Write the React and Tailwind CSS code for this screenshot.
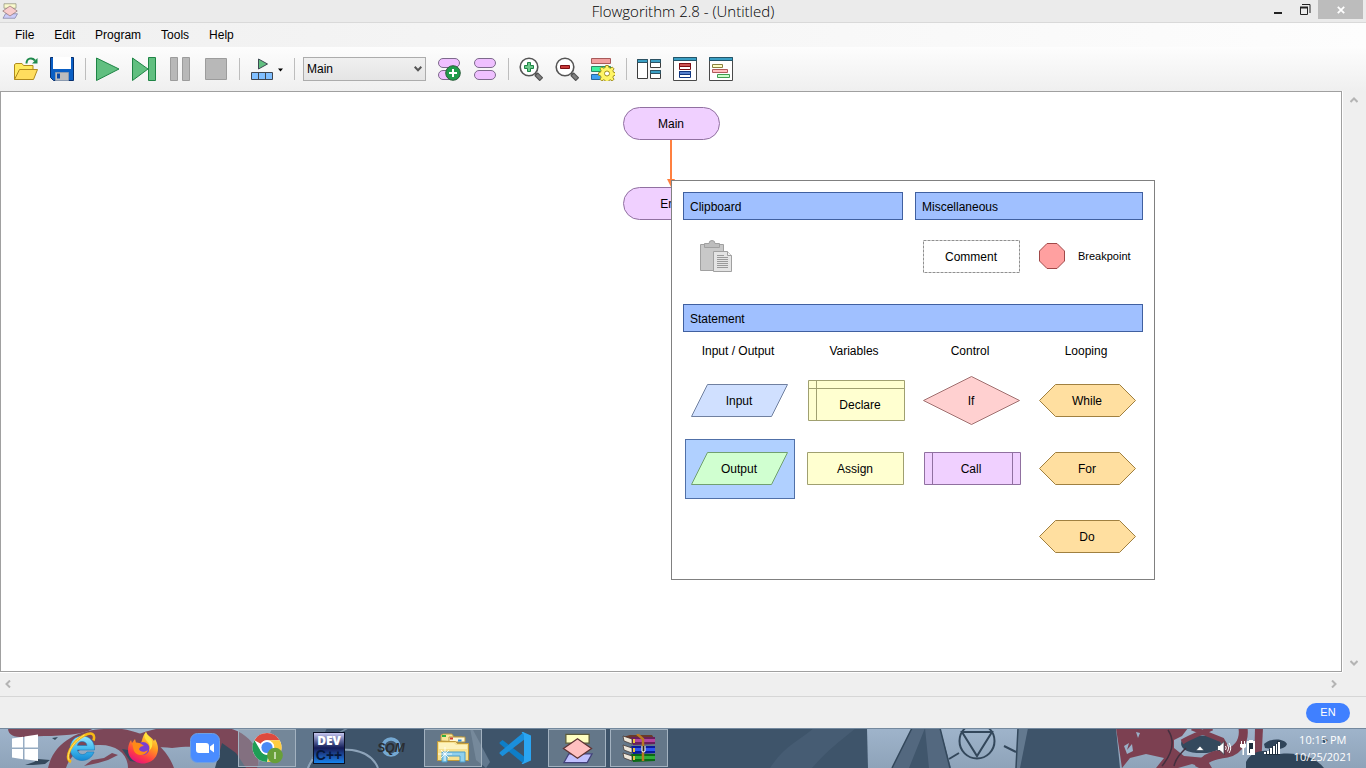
import React from "react";

/* ---------- toolbar drawings ---------- */

function Icon({ children, w = 24 }) {
  return (
    <svg width={w} height="24" viewBox={`0 0 ${w} 24`} fill="none" aria-hidden="true">
      {children}
    </svg>
  );
}

const OpenIcon = () => (
  <Icon>
    <path d="M.5 22.5V7.5L2 6.5h6l1.500 2H19v5" fill="#ffea61" stroke="#b08a1c" />
    <path d="M5.500 12.500h18l-4 10H.5z" fill="#ffdd5e" stroke="#b08a1c" />
    <path d="M12.500 6.500C12.500 1 18 0 21 3.500" stroke="#1f8a4c" strokeWidth="2" />
    <path d="M23.500 1v5.500H18z" fill="#1f8a4c" />
  </Icon>
);

const SaveIcon = () => (
  <Icon>
    <path d="M.5.5h23v23H3.500l-3-3z" fill="#0a5fc4" stroke="#062f6e" />
    <path d="M3 0h18v12H3z" fill="#fff" />
    <path d="M5.500 15.500h13v8h-13z" fill="#bdbdbd" stroke="#8b9bb0" />
    <path d="M7 16.500h3v5H7z" fill="#0a4aa8" />
  </Icon>
);

const PlayIcon = () => (
  <Icon>
    <path d="M.5 1v22.500L23 12z" fill="#61bf80" stroke="#1e8445" />
  </Icon>
);

const StepIcon = () => (
  <Icon>
    <path d="M.5 1v22.500L16 12z" fill="#61bf80" stroke="#1e8445" />
    <path d="M16.500.5h7v23h-7z" fill="#61bf80" stroke="#1e8445" />
  </Icon>
);

const PauseIcon = () => (
  <Icon>
    <path d="M2.500.5h7v23h-7zM14.500.5h7v23h-7z" fill="#b8b8b8" stroke="#9c9c9c" />
  </Icon>
);

const StopIcon = () => (
  <Icon>
    <path d="M1.500 1.500h21v21h-21z" fill="#b8b8b8" stroke="#9c9c9c" />
  </Icon>
);

const LayoutIcon = () => (
  <Icon w={33}>
    <path d="M8.500 2v10l9-5z" fill="#61bf80" stroke="#3d4a52" />
    <path d="M1.500 15.500h21v7h-21zM8.500 15.500v7M15.500 15.500v7" fill="#80bfff" stroke="#3f4650" />
    <path d="M28 11.500h5l-2.500 3z" fill="#000" />
  </Icon>
);

const Pills = () => (
  <>
    <rect x="1.500" y="1.500" width="21" height="9" rx="4.500" fill="#efc0ff" stroke="#7d6a8c" />
    <rect x="1.500" y="13.500" width="21" height="9" rx="4.500" fill="#efc0ff" stroke="#7d6a8c" />
  </>
);

const AddFunctionIcon = () => (
  <Icon>
    <Pills />
    <circle cx="16" cy="16" r="7.300" fill="#1f9c4b" stroke="#2d5f3d" />
    <path d="M16 12v8M12 16h8" stroke="#fff" strokeWidth="2" />
  </Icon>
);

const FunctionsIcon = () => (
  <Icon>
    <Pills />
  </Icon>
);

const Lens = ({ children }) => (
  <Icon>
    <path d="M16 16l2 2" stroke="#5a5a5a" strokeWidth="2" />
    <path d="M17 17l5.500 5.500" stroke="#4d4d4d" strokeWidth="5" />
    <path d="M17.800 17.800l4 4" stroke="#808080" strokeWidth="3" />
    <circle cx="10" cy="10" r="8.800" fill="#fff" stroke="#555" strokeWidth="1.600" />
    {children}
  </Icon>
);

const ZoomInIcon = () => (
  <Lens>
    <path d="M8.500 5.500h3v3h3v3h-3v3h-3v-3h-3v-3h3z" fill="#6cc98a" stroke="#1e8445" />
  </Lens>
);

const ZoomOutIcon = () => (
  <Lens>
    <path d="M5.500 8.500h9v3h-9z" fill="#c93a3a" stroke="#7d0f14" />
  </Lens>
);

const SchemeIcon = () => (
  <Icon>
    <path d="M.5 1.500h19v5H.5z" fill="#f2a0a0" stroke="#a85a5a" />
    <path d="M.5 9.500h19v5H.5z" fill="#40f0a0" stroke="#2b8a62" />
    <path d="M.5 17.500h19v5H.5z" fill="#40a0f0" stroke="#2a669c" />
    <path
      d="M14.700 8.500h2.600l.5 2 1.600.7 1.900-1.100 1.700 1.700-1.100 1.900.7 1.600 2 .5v2.400l-2 .5-.7 1.600 1.100 1.900-1.700 1.700-1.900-1.100-1.600.7-.5 1.500h-2.600l-.5-1.500-1.600-.7-1.900 1.100L9 22.200l1.100-1.900-.7-1.600-1.900-.5v-2.400l1.900-.5.7-1.600L9 11.800l1.700-1.700 1.900 1.100 1.600-.7z"
      fill="#fff566"
      stroke="#a08e1e"
    />
    <circle cx="16" cy="16.500" r="2.500" fill="#fff" stroke="#a08e1e" />
  </Icon>
);

const WindowsIcon = () => (
  <Icon>
    <g stroke="#3c3c3c">
      <path d="M.5 2.500h10v19H.5zM13.500 2.500h10v8h-10zM13.500 13.500h10v8h-10z" fill="#fff" />
      <path d="M.5 2.500h10v3H.5zM13.500 2.500h10v3h-10zM13.500 13.500h10v3h-10z" fill="#3a9fc4" stroke="#2d5263" />
    </g>
  </Icon>
);

const VariablesIcon = () => (
  <Icon>
    <path d="M.5.5h23v23H.5z" fill="#fff" stroke="#4a4a4a" />
    <path d="M.5.5h23v3H.5z" fill="#3a9fc4" stroke="#24566a" />
    <path d="M6.500 6.500h11v6h-11z" fill="#fff" stroke="#7d0f14" />
    <path d="M6.500 6.500h11v3h-11z" fill="#cc5555" stroke="#7d0f14" />
    <path d="M6.500 14.500h11v6h-11z" fill="#fff" stroke="#0f3580" />
    <path d="M6.500 14.500h11v3h-11z" fill="#5580cc" stroke="#0f3580" />
  </Icon>
);

const ConsoleIcon = () => (
  <Icon>
    <path d="M.5.5h23v23H.5z" fill="#fff" stroke="#4a4a4a" />
    <path d="M.5.5h23v3H.5z" fill="#3a9fc4" stroke="#24566a" />
    <path d="M3.500 7.500h10v3h-10z" fill="#ffffc4" stroke="#8a8040" />
    <path d="M3.500 12.500h15v3h-15z" fill="#ffc0c0" stroke="#b05a5a" />
    <path d="M8.500 17.500h12v3h-12z" fill="#ccffcc" stroke="#3f9c4f" />
  </Icon>
);

function Tool({ label, children }) {
  return (
    <button type="button" aria-label={label} className="shrink-0">
      {children}
    </button>
  );
}

const Separator = () => <span className="ml-[11px] mr-2.5 h-[22px] w-px shrink-0 bg-[#bdbdbd]" />;

function Toolbar() {
  return (
    <div className="flex h-11 items-center bg-linear-to-b from-[#fdfdfd] to-[#efefef] pl-3.5">
      <div className="flex gap-3">
        <Tool label="Open"><OpenIcon /></Tool>
        <Tool label="Save"><SaveIcon /></Tool>
      </div>
      <Separator />
      <div className="flex gap-3">
        <Tool label="Run"><PlayIcon /></Tool>
        <Tool label="Step"><StepIcon /></Tool>
        <Tool label="Pause"><PauseIcon /></Tool>
        <Tool label="Stop"><StopIcon /></Tool>
      </div>
      <Separator />
      <Tool label="Layout windows"><LayoutIcon /></Tool>
      <span className="ml-[11px] mr-2 h-[22px] w-px shrink-0 bg-[#bdbdbd]" />
      <div className="grid shrink-0 items-center">
        <select
          aria-label="Function"
          className="col-start-1 row-start-1 h-6 w-[123px] appearance-none border border-[#acacac] bg-linear-to-b from-[#f0f0f0] to-[#e5e5e5] pl-[3px] text-[12px]"
        >
          <option>Main</option>
        </select>
        <svg className="pointer-events-none col-start-1 row-start-1 mr-1 justify-self-end" width="8" height="6" viewBox="0 0 8 6" fill="none">
          <path d="M.7.8L4 4.200 7.300.8" stroke="#555" strokeWidth="2" />
        </svg>
      </div>
      <div className="ml-[11px] flex gap-3">
        <Tool label="Add function"><AddFunctionIcon /></Tool>
        <Tool label="Function manager"><FunctionsIcon /></Tool>
      </div>
      <Separator />
      <div className="flex gap-3">
        <Tool label="Zoom in"><ZoomInIcon /></Tool>
        <Tool label="Zoom out"><ZoomOutIcon /></Tool>
        <Tool label="Chart style"><SchemeIcon /></Tool>
      </div>
      <Separator />
      <div className="flex gap-3">
        <Tool label="Source code viewer"><WindowsIcon /></Tool>
        <Tool label="Variable watch"><VariablesIcon /></Tool>
        <Tool label="Console"><ConsoleIcon /></Tool>
      </div>
    </div>
  );
}

/* ---------- window frame ---------- */

function FlowLogo({ size, faded }) {
  return (
    <svg width={size} height={size} viewBox="0 0 32 32" className={faded ? "opacity-70" : ""} aria-hidden="true">
      <path d="M4 1.500h24v9H4z" fill="#ffffc0" stroke="#5c5c3c" strokeWidth="1.300" />
      <path d="M7 21.500h24l-5 9H2z" fill="#c0c0ff" stroke="#42427a" strokeWidth="1.300" />
      <path d="M1.500 16L16 6l14.500 10L16 26z" fill="#ffc0c0" stroke="#5e3434" strokeWidth="1.300" />
    </svg>
  );
}

function TitleBar() {
  return (
    <header className="grid h-[23px] grid-cols-[1fr_auto_1fr] items-start border-b border-[#d9d9d9] bg-[#ebebeb]">
      <span className="pt-[3px] pl-0.5">
        <FlowLogo size={16} faded />
      </span>
      <h1 className="font-['Open_Sans',sans-serif] text-[15px] leading-[23px] font-light text-black">
        Flowgorithm 2.8 - (Untitled)
      </h1>
      <div className="flex justify-end pr-[3px]">
        <button type="button" aria-label="Minimize" className="flex h-[19px] w-[26px] items-center justify-center">
          <svg width="10" height="12" viewBox="0 0 10 12"><path d="M1 8h8v2H1z" fill="#222" /></svg>
        </button>
        <button type="button" aria-label="Restore" className="flex h-[19px] w-[27px] items-center justify-center">
          <svg width="12" height="12" viewBox="0 0 12 12" fill="none" stroke="#222">
            <path d="M3 .5h8V9" />
            <path d="M1.500 3v7.500h7V3" />
            <path d="M1 3.500h8" strokeWidth="2" />
          </svg>
        </button>
        <button type="button" aria-label="Close" className="flex h-[19px] w-[45px] items-center justify-center bg-[#bcbcbc]">
          <svg width="8" height="8" viewBox="0 0 8 8"><path d="M.8.8l6.400 6.400M7.200.8L.8 7.200" stroke="#fff" strokeWidth="1.800" /></svg>
        </button>
      </div>
    </header>
  );
}

function MenuBar() {
  return (
    <nav className="flex h-6 items-center gap-5 bg-linear-to-r from-[#f0f0f0] to-[#fdfdfd] pl-[15px] text-[12px]">
      {["File", "Edit", "Program", "Tools", "Help"].map((m) => (
        <button type="button" key={m}>{m}</button>
      ))}
    </nav>
  );
}

/* ---------- flowchart ---------- */

function Terminal({ text }) {
  return (
    <div className="grid place-items-center">
      <svg className="col-start-1 row-start-1" width="98" height="33" viewBox="0 0 98 33">
        <rect x="1.500" y=".5" width="96" height="32" rx="16" fill="#f0d0ff" stroke="#9070a0" />
      </svg>
      <span className="col-start-1 row-start-1">{text}</span>
    </div>
  );
}

const shapes = {
  io: "M16.500.5h80l-16 32H.5z",
  box: "M.5.5h96v32H.5z",
  declare: "M1.500.5h96v40h-96zM1.500 8.500h96M9.500.5v40",
  diamond: "M.5 24.500l48-24 48 24-48 24z",
  call: "M1.500.5h96v32h-96zM9.500.5v32M89.500.5v32",
  hex: "M.5 16.500l16-16h64l16 16-16 16h-64z",
};

function Statement({ text, shape, fill, stroke, h = 34, selected, inset }) {
  return (
    <button
      type="button"
      className={`grid h-[60px] w-[110px] place-items-center ${selected ? "border border-[#5070a8] bg-[#b0d0ff]" : ""}`}
    >
      <svg className="col-start-1 row-start-1" width="98" height={h} viewBox={`0 0 98 ${h}`}>
        <path d={shapes[shape]} fill={fill} stroke={stroke} />
      </svg>
      <span className={`col-start-1 row-start-1 ${inset ? "pt-2 pl-2" : "pr-0.5"}`}>{text}</span>
    </button>
  );
}

function SectionTitle({ children }) {
  return (
    <h2 className="flex h-7 items-center border border-[#4060a0] bg-[#a0c0ff] px-1.5 pt-0.5">{children}</h2>
  );
}

function Column({ title, children }) {
  return (
    <div className="flex w-[110px] flex-col gap-2">
      <h3 className="-mb-2 h-[39px] pr-1 text-center leading-[38px]">{title}</h3>
      {children}
    </div>
  );
}

function Palette() {
  const yellow = { fill: "#ffffd0", stroke: "#a0a070" };
  const orange = { fill: "#ffdfa0", stroke: "#a08040" };
  return (
    <section className="absolute top-22 left-1/2 w-[484px] border border-[#808080] bg-white p-[11px] pb-3">
      <div className="grid grid-cols-[220px_228px] gap-x-3">
        <SectionTitle>Clipboard</SectionTitle>
        <SectionTitle>Miscellaneous</SectionTitle>
        <div className="flex h-[84px] items-start pt-5 pl-4">
          <button type="button" aria-label="Paste">
            <svg width="34" height="33" viewBox="0 0 34 33">
              <path d="M1.500 4.500h23v26h-23z" fill="#c8c8c8" stroke="#a0a0a0" />
              <path d="M5.500 3.500h4.500a3 3 0 0 1 6 0h4.500v4h-15z" fill="#bdbdbd" stroke="#a0a0a0" />
              <path d="M14.500 11.500h14l4 4v16h-18z" fill="#e4e4e4" stroke="#a0a0a0" />
              <path d="M28.500 11.500v4h4" fill="#f4f4f4" stroke="#a0a0a0" />
              <path d="M18 15.500h7M18 17.500h11M18 19.500h11M18 21.500h11M18 23.500h11M18 25.500h11M18 27.500h11" stroke="#9a9a9a" />
            </svg>
          </button>
        </div>
        <div className="flex h-[84px] items-start pt-5 pl-2">
          <button type="button" className="grid place-items-center">
            <svg className="col-start-1 row-start-1" width="98" height="33" viewBox="0 0 98 33">
              <rect x=".5" y=".5" width="96" height="32" fill="#fff" stroke="#909090" strokeDasharray="3 1" />
            </svg>
            <span className="col-start-1 row-start-1 pr-0.5">Comment</span>
          </button>
          <button type="button" className="ml-[18px] flex h-8 items-center gap-3 text-[11px]">
            <svg width="27" height="26" viewBox="0 0 27 26">
              <path d="M8 .5h10l7.500 7.500v10L18 25.500H8L.5 18V8z" fill="#ffa0a0" stroke="#a04848" />
            </svg>
            Breakpoint
          </button>
        </div>
      </div>
      <SectionTitle>Statement</SectionTitle>
      <div className="flex gap-1.5 pl-0.5">
        <Column title="Input / Output">
          <Statement text="Input" shape="io" fill="#d0e0ff" stroke="#7080a0" />
          <Statement text="Output" shape="io" fill="#d0ffd0" stroke="#70a070" selected />
        </Column>
        <Column title="Variables">
          <Statement text="Declare" shape="declare" h={42} inset {...yellow} />
          <Statement text="Assign" shape="box" {...yellow} />
        </Column>
        <Column title="Control">
          <Statement text="If" shape="diamond" h={50} fill="#ffd0d0" stroke="#a07070" />
          <Statement text="Call" shape="call" fill="#f0d0ff" stroke="#9070a0" />
        </Column>
        <Column title="Looping">
          <Statement text="While" shape="hex" {...orange} />
          <Statement text="For" shape="hex" {...orange} />
          <Statement text="Do" shape="hex" {...orange} />
        </Column>
      </div>
    </section>
  );
}

const Chevron = ({ d }) => (
  <svg width="8" height="8" viewBox="0 0 8 8" fill="none" aria-hidden="true">
    <path d={d} stroke="#b4b4b4" strokeWidth="2" />
  </svg>
);

function Workspace() {
  return (
    <div className="grid min-h-0 flex-1 grid-cols-[1fr_24px] grid-rows-[1fr_24px] bg-[#efefef]">
      <main className="relative flex flex-col items-center border border-[#a0a0a0] bg-white pt-[15px] text-[12px]">
        <Terminal text="Main" />
        <svg width="10" height="47" viewBox="0 0 10 47">
          <path d="M4 0h2v39h3l-4 8-4-8h3z" fill="#ff8040" />
        </svg>
        <Terminal text="End" />
        <Palette />
      </main>
      <div className="flex flex-col items-center justify-between border-l border-white py-[5px] pr-0.5">
        <button type="button" aria-label="Scroll up" className="flex"><Chevron d="M.5 6L4 2.500 7.500 6" /></button>
        <button type="button" aria-label="Scroll down" className="flex"><Chevron d="M.5 2L4 5.500 7.500 2" /></button>
      </div>
      <div className="flex items-center justify-between border-t border-white px-1 pb-0.5">
        <button type="button" aria-label="Scroll left" className="flex"><Chevron d="M6 .5L2.500 4 6 7.500" /></button>
        <button type="button" aria-label="Scroll right" className="flex"><Chevron d="M2 .5L5.500 4 2 7.500" /></button>
      </div>
    </div>
  );
}

/* ---------- desktop taskbar ---------- */

function Wallpaper() {
  return (
    <svg className="absolute inset-0 h-full w-full" viewBox="0 0 1366 40" preserveAspectRatio="none" aria-hidden="true">
      <defs>
        <linearGradient id="sky" x1="0" y1="0" x2="0" y2="1">
          <stop offset="0" stopColor="#9fb4cb" />
          <stop offset="1" stopColor="#8ea3b9" />
        </linearGradient>
      </defs>
      <path d="M0 0h1366v40H0z" fill="#3e546a" />
      <path d="M0 0h305c12 10 10 25 4 40H0z" fill="url(#sky)" />
      <path d="M8 0h86c-8 6-30 8-50 8-20 1-36 4-36-8z" fill="#7c4758" />
      <path d="M48 40C54 14 78 2 104 1c32-3 60 12 70 39h-46c0-14-12-24-30-23-16 0-28 10-32 23z" fill="#7c4758" />
      <path d="M122 14C150-2 180-4 212-2c30 0 50 18 46 42h-26c-6-18-28-24-60-20-20-2-36 2-50-6z" fill="#7c4758" />
      <path d="M25 37l9-3 4-3 12 1-5 4-12 1zM52 10l6-1-3 3zM122 21l12 2 10 12-14-2z" fill="#34495c" />
      <path d="M84 38l8-6 12-2 8-5 6 2-10 5-10 3z" fill="#7c4758" />
      <path d="M215 40l7-25 14 10 10 15z" fill="#34495c" />
      <path d="M272 0h55l-20 40h-50z" fill="#5f758b" />
      <path d="M308 40c6-16 20-20 44-18 14 2 22 8 26 18" stroke="#8ea4ba" strokeWidth="2" fill="none" />
      <path d="M312 30c12-8 14-20 36-30" stroke="#74899f" strokeWidth="1.500" fill="none" />
      <path d="M472 0l18 34-4 6-10-8-6-32z" fill="#62788e" />
      <path d="M770 40c14-22 30-28 44-40h42c-20 16-30 24-44 40z" fill="#465c73" />
      <path d="M867 0h45l-20 40h-24z" fill="url(#sky)" />
      <path d="M912 0h28l12 40h-60z" fill="#53687f" />
      <path d="M925 0l4 40h-20z" fill="#40566c" />
      <path d="M940 0h78l-1 40h-66z" fill="url(#sky)" />
      <path d="M1018 0h10l-8 40h-4z" fill="#63798f" />
      <path d="M1018 0l-2 40M912 0l-20 40M940 0l10 40" fill="none" stroke="#33485c" strokeWidth="1.500" />
      <circle cx="977" cy="13" r="17.500" fill="none" stroke="#33475b" strokeWidth="2" />
      <path d="M962 4h30l-15 24zM949 31l10-6M1004 18l12 6" fill="none" stroke="#33475b" strokeWidth="2" />
      <path d="M1116 0h250v40h-246z" fill="url(#sky)" />
      <path d="M1116 0h72l-6 8-8 4v8l10 8 22 2 6 10h-8l-12-4-14 4h-22l8-10-18-4-16 4-8 10z" fill="#7c4051" />
      <path d="M1124 18l5-3-2 7 5-6 1 7-6 3zM1136 4l4 1-2 5z" fill="#9ab0c7" />
      <path d="M1182 12c8-6 28-6 38 0 4 8-6 14-18 13-14 1-24-5-20-13z" fill="#34495d" />
      <path d="M1192 0l30 12 6 10M1182 14c10-6 22-10 30-14" stroke="#7c4051" strokeWidth="5" fill="none" />
      <path d="M1243 0c2 14-6 25-22 26-12 2-18 6-22 14" stroke="#7c4051" strokeWidth="9" fill="none" />
      <path d="M1255 0h8l-2 40h-7z" fill="#7c4051" />
      <path d="M1168 2c8 12 4 24-6 36M1186 20c-6 6-10 10-12 18" stroke="#44303f" strokeWidth="1.500" fill="none" />
      <path d="M1264 16c6-6 20-6 23 0-2 6-12 6-22 4zM1246 34c6-12 20-14 34-8 20-2 36 4 44 14h-78zM1322 10l6 2-4 4z" fill="#2f4459" />
      <path d="M0 .5h1366" stroke="#74899e" />
    </svg>
  );
}

const WinLogo = () => (
  <svg width="28" height="28" viewBox="0 0 28 28">
    <path d="M1 4.500l11-1.700v10.700H1zM13.500 2.500L27 .5v13H13.500zM1 15h11v10.200L1 23.500zM13.500 15H27v12l-13.500-1.800z" fill="#fff" />
  </svg>
);

const IeLogo = () => (
  <svg width="32" height="32" viewBox="0 0 32 32" fill="none">
    <defs>
      <linearGradient id="ie" x1="0" y1="0" x2="0" y2="1">
        <stop offset="0" stopColor="#9be6ff" />
        <stop offset=".5" stopColor="#45bdf0" />
        <stop offset="1" stopColor="#1587d2" />
      </linearGradient>
    </defs>
    <path
      fillRule="evenodd"
      d="M17 4c8 0 13 6 12.500 14H12.500c.5 3 2.500 4.500 5 4.500 2 0 3.500-.8 4.500-2.500h7c-2 5.500-6.500 8.500-12 8.500C10 28.500 5 23 5 16.300 5 9.500 10 4 17 4zm0 5.500c-2.500 0-4.200 1.500-4.600 4H22c-.3-2.500-2.200-4-5-4z"
      fill="url(#ie)"
      stroke="#1878b8"
      strokeWidth=".6"
    />
    <path d="M6 30C-1 26 6 10 19 3.500c8-4 11.500-1.500 9.500 5" stroke="#f6b916" strokeWidth="2.600" />
    <path d="M4 28C1 22 8 9.500 19.500 3" stroke="#ffe36b" strokeWidth="1" />
  </svg>
);

const FirefoxLogo = () => (
  <svg width="32" height="32" viewBox="0 0 32 32">
    <defs>
      <linearGradient id="fx" x1=".8" y1="0" x2=".3" y2="1">
        <stop offset="0" stopColor="#fff04a" />
        <stop offset=".4" stopColor="#ff9a1f" />
        <stop offset=".75" stopColor="#ff3b47" />
        <stop offset="1" stopColor="#e4127d" />
      </linearGradient>
    </defs>
    <path d="M19 0c1 4 6 5 8 9l1-2c3 5 4 10 2 15-2 6-8 9.500-14 9.500C8 31.500 1 26 1 18c0-4 1-7 3-10l1 3 3-4 1 4h5c2-5 2-8 5-11z" fill="url(#fx)" />
    <circle cx="16" cy="16.500" r="6.500" fill="#7a3fd0" />
    <path d="M5 11c4-1 8-1 12 3-3 0-4 1-5 3 1 3 5 4 9 1-2 6-11 7-14 1-1-3-1-5-2-8z" fill="#ff8a16" />
    <path d="M19 0c-2 3-2 5 0 8 3 3 5 6 3 11 3-3 4-6 3-10-1-4-5-5-6-9z" fill="#ffe23c" />
  </svg>
);

const ZoomLogo = () => (
  <svg width="30" height="30" viewBox="0 0 30 30">
    <rect x=".5" y=".5" width="29" height="29" rx="7" fill="#4a8cff" stroke="#6f9fe0" />
    <path d="M6 10h10a3 3 0 0 1 3 3v7H9a3 3 0 0 1-3-3zM20 13.500l4-3v9l-4-3z" fill="#fff" />
  </svg>
);

const ChromeLogo = () => (
  <svg width="32" height="32" viewBox="0 0 32 32">
    <circle cx="16" cy="15.500" r="14.500" fill="#fff" />
    <path d="M3.440 8.250A14.500 14.500 0 0 1 28.560 8.250H16a7.250 7.250 0 0 0-6.280 3.600z" fill="#dd4b3e" />
    <path d="M3.440 8.250l6.280 10.870A7.250 7.250 0 0 0 17.500 22.600L16 30A14.500 14.500 0 0 1 3.440 8.250z" fill="#1f9d55" />
    <path d="M28.560 8.250H16a7.250 7.250 0 0 1 6.280 10.870L16 30A14.500 14.500 0 0 0 28.560 8.250z" fill="#ffcd40" />
    <circle cx="16" cy="15.500" r="7.200" fill="#fff" />
    <circle cx="16" cy="15.500" r="5.600" fill="#4a8af4" />
    <circle cx="24" cy="23.500" r="7.800" fill="#689f38" />
    <path d="M24 20v7" stroke="#d7e8c6" strokeWidth="1.600" />
  </svg>
);

function DevLogo() {
  return (
    <span className="flex h-8 w-8 flex-col items-center justify-center border border-[#0b1226] bg-linear-to-b from-[#c8c8f0] via-[#151c58] to-[#1284f0] font-bold">
      <span className="font-['Open_Sans',sans-serif] text-[12px] leading-[15px] font-extrabold text-white">DEV</span>
      <span className="text-[14px] leading-[15px] text-[#06183c]">C++</span>
    </span>
  );
}

const SqmLogo = () => (
  <svg width="32" height="32" viewBox="0 0 32 32" fill="none">
    <circle cx="16" cy="15" r="8" stroke="#75a9d3" strokeWidth="3.500" />
    <text x="16" y="20" textAnchor="middle" fontFamily="Liberation Sans, sans-serif" fontWeight="700" fontStyle="italic" fontSize="12" fill="#2a2d31">SQM</text>
  </svg>
);

const ExplorerLogo = () => (
  <svg width="34" height="32" viewBox="0 0 34 32">
    <path d="M5 9V3l2-1h9l2 3h8v5z" fill="#f8e59a" stroke="#b8963c" />
    <path d="M6 3h4v2H6z" fill="#2fae3f" />
    <path d="M13 5h16v5H13z" fill="#fff7d6" stroke="#b8963c" />
    <path d="M14 5.500h3v2h-3z" fill="#d33a2e" />
    <path d="M22 7.500h3.500v2H22z" fill="#2a8be0" />
    <path d="M1.500 9.500h18l2 2h11v17h-31z" fill="#f7e190" stroke="#c29b3a" />
    <path d="M3 11h15l2 2h11v4H3z" fill="#fdf2bd" />
    <path d="M6 30V20h23v10h-5v-6H11v6z" fill="#8fd0ee" stroke="#4a9cc8" />
    <path d="M9 15v14M2 22h14M5 18l8 8M13 18l-8 8" stroke="#fff" strokeWidth=".8" />
  </svg>
);

const CodeLogo = () => (
  <svg width="34" height="34" viewBox="0 0 34 34">
    <path d="M1.500 11.500l3-2.500L26 25.500V33L1.700 12.700z" fill="#0e7ec8" />
    <path d="M1.500 22.500l3 2.700L26 8.700V1L1.700 21.300z" fill="#1a8fdc" />
    <path d="M25 1l8 3.500v25L25 33c-1 .3-1.500 0-1-1 1.500-.8 2-1.500 2-3V5c0-1.500-.5-2.200-2-3-.5-1 0-1.300 1-1z" fill="#2aa5f2" />
  </svg>
);

const books = [
  { y: 1, cover: "#b0459c", edge: "#6a1f5c" },
  { y: 10, cover: "#2f55f0", edge: "#0b1a9c" },
  { y: 18, cover: "#2fae3a", edge: "#0b6a14" },
];

const RarLogo = () => (
  <svg width="34" height="28" viewBox="0 0 34 28">
    <path d="M1 3l7-2h22l3 5-22 1z" fill="#6a3a2a" />
    {books.map(({ y, cover, edge }) => (
      <g key={y}>
        <path d={`M8 ${y + 3}l2-1h23v7l-22 1z`} fill={edge} />
        <path d={`M11 ${y + 4}h22v3H11z`} fill={cover} />
        <path d={`M1 ${y + 1}l9 3v5l-8-3z`} fill="#ece6da" stroke="#3a2d2a" strokeWidth=".7" />
        <path d={`M11 ${y + 4}h2v4h-2z`} fill="#e8c33c" />
      </g>
    ))}
    <path d="M15 0l6 5v22" stroke="#b87a22" strokeWidth="2.500" fill="none" />
    <path d="M20 12v5q1.500 2 3 0v-5" stroke="#e6e6e6" strokeWidth="1.200" fill="#2a2418" />
  </svg>
);

const apps = [
  { name: "Internet Explorer", Logo: IeLogo },
  { name: "Firefox", Logo: FirefoxLogo },
  { name: "Zoom", Logo: ZoomLogo },
  { name: "Chrome", Logo: ChromeLogo, open: true },
  { name: "Dev-C++", Logo: DevLogo },
  { name: "SQM", Logo: SqmLogo },
  { name: "File Explorer", Logo: ExplorerLogo, open: true },
  { name: "Visual Studio Code", Logo: CodeLogo },
  { name: "Flowgorithm", Logo: () => <FlowLogo size={31} />, open: true },
  { name: "WinRAR", Logo: RarLogo, open: true },
];

function Tray() {
  return (
    <div className="ml-auto flex items-center gap-2 pr-3.5 text-white">
      <svg className="mr-[3px]" width="10" height="8" viewBox="0 0 10 8">
        <path d="M1 6.500L5 2l4 4.500z" fill="#fff" stroke="#263a4c" strokeWidth=".6" />
      </svg>
      <svg width="16" height="16" viewBox="0 0 16 16" fill="none">
        <path d="M1.500 5.500h2.500L8 1.500v13L4 10.500H1.500z" fill="#fff" stroke="#1f2f3e" strokeWidth=".7" />
        <path d="M9.500 6q1.500 2 0 4M11.500 4.500q2.500 3.500 0 7M13 3q3.500 5 0 10" stroke="#fff" />
      </svg>
      <svg width="16" height="16" viewBox="0 0 16 16" fill="none">
        <path d="M8 2h6v12H8z" fill="#1f2f3e" stroke="#fff" strokeWidth="2" />
        <path d="M9 0h4v2H9zM10 9h3v4h-3z" fill="#fff" />
        <path d="M1 1h1v3h2V1h1v3h1v3L4 8.500V15H2.500V8.500L0 7V4h1z" fill="#fff" />
      </svg>
      <svg width="16" height="14" viewBox="0 0 16 14" shapeRendering="crispEdges">
        <path d="M2 10h3v4H2zM5 8h3v6H5zM8 5h3v9H8zM11 3h2v11h-2zM13 0h3v14h-3z" fill="#1f2f3e" />
        <path d="M0 11h2v2H0zM3 10h2v3H3zM6 7h2v6H6zM9 5h2v8H9zM12 3h1v10h-1zM14 1h2v12h-2z" fill="#fff" />
      </svg>
      <div className="ml-1.5 text-center font-['Open_Sans',sans-serif] text-[11px] leading-[17px]">
        <div>10:15 PM</div>
        <div>10/25/2021</div>
      </div>
    </div>
  );
}

function Taskbar() {
  return (
    <footer className="relative h-10 shrink-0 overflow-hidden">
      <Wallpaper />
      <div className="relative flex h-full items-center gap-1">
        <button type="button" aria-label="Start" className="flex h-10 w-12 items-center justify-center pl-0.5">
          <WinLogo />
        </button>
        {apps.map(({ name, Logo, open }) => (
          <button
            type="button"
            key={name}
            aria-label={name}
            className={`flex h-[38px] w-[58px] items-center justify-center ${open ? "border border-[#a3b2c0] bg-[#8a9aa8]/50" : ""}`}
          >
            <Logo />
          </button>
        ))}
        <Tray />
      </div>
    </footer>
  );
}

export default function App() {
  return (
    <div className="flex h-screen flex-col bg-[#efefef] font-['Liberation_Sans',Arial,sans-serif] text-black">
      <TitleBar />
      <MenuBar />
      <Toolbar />
      <Workspace />
      <div className="flex h-8 shrink-0 items-center justify-end border-t border-[#d6d6d6] pr-4">
        <button type="button" className="h-5 w-11 rounded-full bg-[#4080ff] text-[11px] text-white">EN</button>
      </div>
      <Taskbar />
    </div>
  );
}
